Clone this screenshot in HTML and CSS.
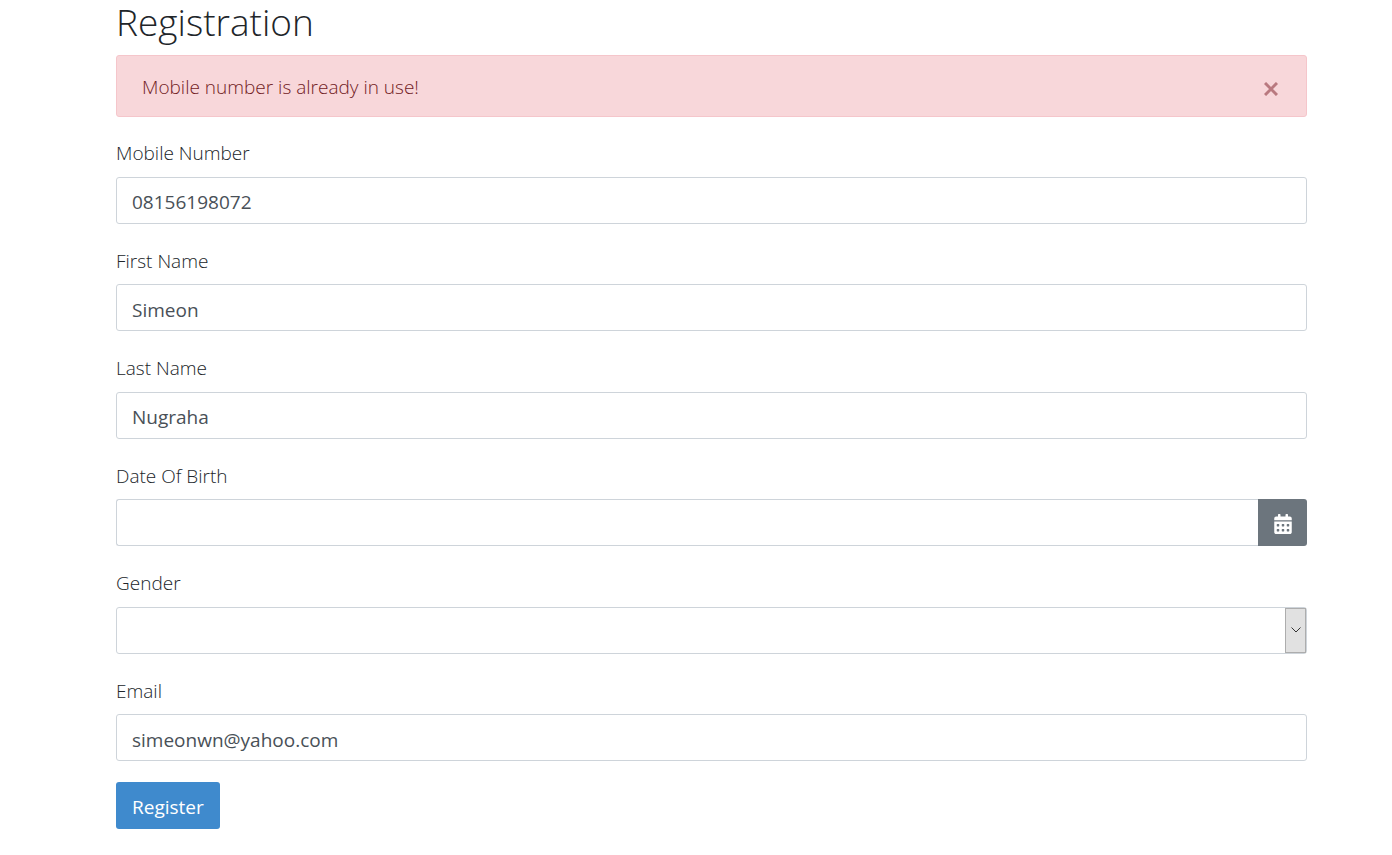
FILE: index.html
```html
<!DOCTYPE html>
<html lang="en">
<head>
<meta charset="utf-8">
<meta name="viewport" content="width=device-width, initial-scale=1">
<title>Registration</title>
<link rel="stylesheet" href="styles.css">
</head>
<body>
<main class="page">
  <h1 class="title">Registration</h1>
  <div class="alert" role="alert">
    <span class="alert-text">Mobile number is already in use!</span>
    <button class="alert-close" type="button" aria-label="Close">
      <svg class="close-icon" viewBox="0 0 14 14" aria-hidden="true"><path d="M1 1 13 13M13 1 1 13"/></svg>
    </button>
  </div>
  <form class="form">
    <div class="field">
      <label class="label" for="mobile">Mobile Number</label>
      <input class="control" id="mobile" type="tel" value="08156198072">
    </div>
    <div class="field">
      <label class="label" for="first">First Name</label>
      <input class="control" id="first" type="text" value="Simeon">
    </div>
    <div class="field">
      <label class="label" for="last">Last Name</label>
      <input class="control" id="last" type="text" value="Nugraha">
    </div>
    <div class="field">
      <label class="label" for="birth">Date Of Birth</label>
      <div class="group">
        <input class="control group-input" id="birth" type="text">
        <button class="date-button" type="button" aria-label="Choose date">
          <svg class="calendar-icon" viewBox="0 0 448 512" aria-hidden="true"><path d="M0 464c0 26.500 21.500 48 48 48h352c26.500 0 48-21.500 48-48V192H0v272zm320-196c0-6.600 5.400-12 12-12h40c6.600 0 12 5.400 12 12v40c0 6.600-5.400 12-12 12h-40c-6.600 0-12-5.400-12-12v-40zm0 128c0-6.600 5.400-12 12-12h40c6.600 0 12 5.400 12 12v40c0 6.600-5.400 12-12 12h-40c-6.600 0-12-5.400-12-12v-40zM192 268c0-6.600 5.400-12 12-12h40c6.600 0 12 5.400 12 12v40c0 6.600-5.400 12-12 12h-40c-6.600 0-12-5.400-12-12v-40zm0 128c0-6.600 5.400-12 12-12h40c6.600 0 12 5.400 12 12v40c0 6.600-5.400 12-12 12h-40c-6.600 0-12-5.400-12-12v-40zM64 268c0-6.600 5.400-12 12-12h40c6.600 0 12 5.400 12 12v40c0 6.600-5.400 12-12 12H76c-6.600 0-12-5.400-12-12v-40zm0 128c0-6.600 5.400-12 12-12h40c6.600 0 12 5.400 12 12v40c0 6.600-5.400 12-12 12H76c-6.600 0-12-5.400-12-12v-40zM400 64h-48V16c0-8.800-7.200-16-16-16h-32c-8.800 0-16 7.200-16 16v48H160V16c0-8.800-7.200-16-16-16h-32c-8.800 0-16 7.200-16 16v48H48C21.500 64 0 85.500 0 112v48h448v-48c0-26.500-21.500-48-48-48z"/></svg>
        </button>
      </div>
    </div>
    <div class="field">
      <label class="label" for="gender">Gender</label>
      <div class="select-wrap">
        <select class="control" id="gender">
          <option value="" selected></option>
          <option>Male</option>
          <option>Female</option>
        </select>
        <span class="select-arrow" aria-hidden="true">
          <svg class="chevron-icon" viewBox="0 0 10 6"><path d="M.5.5 5 5 9.500.5"/></svg>
        </span>
      </div>
    </div>
    <div class="field">
      <label class="label" for="email">Email</label>
      <input class="control" id="email" type="email" value="simeonwn@yahoo.com">
    </div>
    <button class="submit" type="submit">Register</button>
  </form>
</main>
</body>
</html>
```
FILE: styles.css
```css
* {
  box-sizing: border-box;
}

body {
  margin: 0;
  background: #fff;
  color: #212529;
  font-family: "Open Sans", "Noto Sans", sans-serif;
  font-size: 19px;
  font-weight: 300;
  line-height: 1.5;
}

.page {
  padding: 0 85px 26px 116px;
}

.title {
  margin: 0 0 11px;
  font-size: 37px;
  font-weight: 300;
  line-height: 44px;
}

.alert {
  display: flex;
  align-items: center;
  justify-content: space-between;
  min-height: 62px;
  margin-bottom: 22px;
  padding: 2px 24px 0 25px;
  border: 1px solid #f5c6cb;
  border-radius: 3px;
  background: #f8d7da;
  color: #721c24;
}

.alert-close {
  display: flex;
  padding: 8px 4px 4px;
  border: 0;
  background: none;
  color: #b9797f;
  cursor: pointer;
}

.close-icon {
  width: 14px;
  height: 14px;
  fill: none;
  stroke: currentColor;
  stroke-width: 3;
}

.field {
  display: flex;
  flex-direction: column;
  gap: 9px;
  margin-bottom: 23px;
}

.field:last-of-type {
  margin-bottom: 21px;
}

.control {
  width: 100%;
  height: 47px;
  padding: 4px 15px 0;
  border: 1px solid #ced4da;
  border-radius: 3px;
  background: #fff;
  color: #495057;
  font-family: inherit;
  font-size: 19px;
  font-weight: 400;
  appearance: none;
}

.group {
  display: flex;
}

.group-input {
  flex: 1;
  min-width: 0;
  border-right: 0;
  border-radius: 3px 0 0 3px;
}

.date-button {
  display: flex;
  align-items: center;
  justify-content: center;
  width: 49px;
  padding: 2px 0 0;
  border: 0;
  border-radius: 0 3px 3px 0;
  background: #6c757d;
  color: #fff;
}

.calendar-icon {
  width: 18px;
  height: 20px;
  fill: currentColor;
}

.select-wrap {
  position: relative;
}

.select-wrap .control {
  display: block;
}

.select-arrow {
  position: absolute;
  top: 1px;
  right: 1px;
  bottom: 1px;
  display: flex;
  align-items: center;
  justify-content: center;
  width: 21px;
  border: 1px solid #adadad;
  background: #e1e1e1;
  pointer-events: none;
}

.chevron-icon {
  width: 10px;
  height: 6px;
  fill: none;
  stroke: #333;
}

.submit {
  display: block;
  height: 47px;
  padding: 2px 16px 0;
  border: 0;
  border-radius: 3px;
  background: #3f8acd;
  color: #fff;
  font-family: inherit;
  font-size: 19px;
  font-weight: 400;
}
```
